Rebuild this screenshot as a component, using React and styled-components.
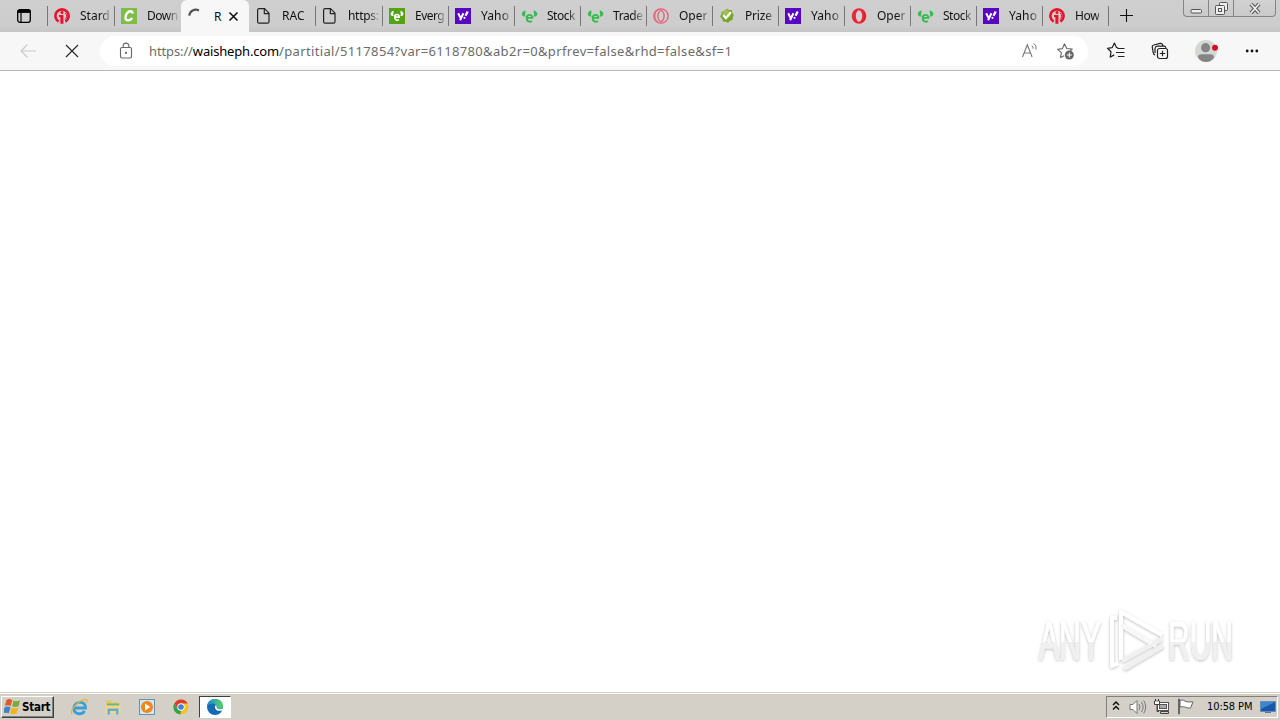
import React from "react";
import styled, { createGlobalStyle } from "styled-components";

const GlobalStyle = createGlobalStyle`
body {
  margin: 0;
  background: #fff;
  overflow: hidden;
}
* {
  box-sizing: border-box;
}
svg {
  display: block;
  flex: none;
}
`;

const Screen = styled.div`
display: flex;
flex-direction: column;
width: 1280px;
height: 720px;
background: #fff;
font-family: "Noto Sans", "Open Sans", sans-serif;
color: #111;
`;

const TabStrip = styled.div`
display: flex;
align-items: flex-start;
height: 32px;
flex: none;
background: linear-gradient(#cfcfcf, #cdcdcd 26px, #c6c6c6);
`;

const TabActions = styled.div`
display: flex;
width: 47px;
height: 32px;
padding: 8px 0 0 16px;
`;

const Tab = styled.div`
display: flex;
align-items: center;
width: ${(p) => p.$width || 66}px;
height: 32px;
flex: none;
padding-left: 7px;
background: linear-gradient(#777, #777) left 6px / ${(p) => (p.$plain ? "0 0" : "1px 20px")} no-repeat;
`;

const TabIcon = styled.div`
width: 26px;
flex: none;
`;

const TabTitle = styled.span`
white-space: nowrap;
font-size: 12px;
line-height: 18px;
letter-spacing: ${(p) => p.$spacing || "0"};
background: linear-gradient(90deg, #111 20px, rgba(17, 17, 17, 0.15) 31px);
background-clip: text;
-webkit-background-clip: text;
color: transparent;
`;

const ActiveTab = styled.div`
display: flex;
align-items: center;
width: 68px;
height: 32px;
flex: none;
padding-left: 6px;
background: #f7f7f7;
border-radius: 6px 6px 0 0;
font-size: 12px;
`;

const ActiveTitle = styled.span`
width: 14px;
margin: 0 0 0 11px;
`;

const NewTab = styled.div`
display: flex;
width: 75px;
height: 32px;
padding: 9px 0 0 12px;
background: linear-gradient(#777, #777) left 6px / 1px 20px no-repeat;
`;

const WindowControls = styled.div`
display: flex;
width: 93px;
height: 17px;
border: 1px solid #858585;
border-top: 0;
border-radius: 0 0 4px 4px;
background: linear-gradient(#d2d2d2, #cacaca);
`;

const WindowButton = styled.div`
display: flex;
align-items: center;
justify-content: center;
width: ${(p) => p.$width}px;
border-left: ${(p) => (p.$first ? "0" : "1px solid #858585")};
`;

const Toolbar = styled.div`
display: flex;
align-items: center;
height: 39px;
flex: none;
background: #f7f7f7;
border-bottom: 1px solid #b9b9b9;
`;

const NavButtons = styled.div`
display: flex;
gap: 28px;
width: 100px;
padding-left: 20px;
`;

const AddressBar = styled.div`
display: flex;
align-items: center;
width: 988px;
height: 30px;
padding: 0 12px 0 18px;
border-radius: 15px;
background: #fff;
`;

const Url = styled.div`
flex: 1;
margin-left: 15px;
font-size: 13px;
line-height: 20px;
letter-spacing: -0.12px;
white-space: nowrap;
color: #6c6c6c;
`;

const Domain = styled.span`
letter-spacing: -0.17px;
color: #000;
`;

const Path = styled.span`
letter-spacing: 0.35px;
`;

const AddressIcons = styled.div`
display: flex;
gap: 17px;
`;

const ToolIcons = styled.div`
display: flex;
align-items: center;
gap: 22px;
padding-left: 18px;
`;

const Page = styled.main`
display: flex;
flex: 1;
align-items: flex-end;
justify-content: flex-end;
padding: 0 40px 16px 0;
`;

const Taskbar = styled.div`
display: flex;
align-items: center;
height: 28px;
flex: none;
padding: 2px 1px 2px;
background: #d4d0c8;
border-top: 1px solid #d4d0c8;
box-shadow: inset 0 1px #fff;
font-family: "DejaVu Sans Condensed", "DejaVu Sans", sans-serif;
`;

const StartButton = styled.div`
display: flex;
align-items: center;
gap: 1px;
width: 53px;
height: 22px;
padding-left: 2px;
border: 1px solid;
border-color: #fff #404040 #404040 #fff;
box-shadow: inset -1px -1px #808080;
font-size: 11.5px;
font-weight: 700;
letter-spacing: -0.25px;
color: #000;
`;

const QuickLaunch = styled.div`
display: flex;
align-items: center;
flex: 1;
gap: 16px;
padding-left: 16px;
`;

const ActiveTask = styled.div`
display: flex;
align-items: center;
justify-content: center;
width: 32px;
height: 22px;
margin-left: -7px;
border: 1px solid;
border-color: #404040 #fff #fff #404040;
background: #fff;
`;

const Tray = styled.div`
display: flex;
align-items: center;
width: 172px;
height: 22px;
margin-right: 1px;
padding-left: 5px;
border: 1px solid;
border-color: #808080 #fff #fff #808080;
`;

const TrayIcons = styled.div`
display: flex;
align-items: center;
gap: 6px;
margin-left: 9px;
`;

const Clock = styled.span`
width: 53px;
margin-left: 12px;
font-size: 11px;
letter-spacing: -0.1px;
white-space: nowrap;
color: #000;
`;

const InfoIcon = () => (
  <svg width="16" height="16" viewBox="0 0 16 16" fill="none">
    <path d="M4.6 13.6A6.6 6.6 0 1 1 11.4 13.6" stroke="#e9112b" strokeWidth="2.6" />
    <circle cx="8" cy="4.6" r="1.5" fill="#e9112b" />
    <path d="M5 7h4.4v8.8H6.4V9H5z" fill="#e9112b" />
    <path d="M11.2 5A4.2 4.2 0 0 1 11 11.5" stroke="#e9112b" strokeWidth="1" />
  </svg>
);

const CIcon = () => (
  <svg width="16" height="16" viewBox="0 0 16 16" fill="none">
    <path d="M0 0h16v16H0z" fill="#7fbd4b" />
    <path d="M11.6 5.6C11.6 2.5 8 2.7 6 5.3c-2.2 2.9-2 7 .8 7.1 1.8.1 3.3-.9 4.4-2.4" stroke="#fff" strokeWidth="2.4" />
  </svg>
);

const FileIcon = () => (
  <svg width="16" height="16" viewBox="0 0 16 16" fill="none" stroke="#222" strokeWidth="1.2" strokeLinejoin="round">
    <path d="M1.6 2.2Q1.6.7 3.1.7h5.5l4.4 4.4v8.6q0 1.5-1.5 1.5H3.1q-1.5 0-1.5-1.5zM8.3 1v4.6h4.6" />
  </svg>
);

const BullIcon = ({ filled }) => (
  <svg width="18" height="16" viewBox="0 0 18 16" fill="none">
    {filled && <path d="M0 0h16v16H0z" fill="#54a313" />}
    <g transform={filled ? "translate(.9 .9) scale(.83)" : undefined}>
      <path d="M4.3 2.2C-.6 3.9-.2 9 4.8 8.6 3 7 5 5.5 4.3 2.2M12.9 2.2c4.9 1.7 4.5 6.8-.5 6.4 1.8-1.6-.2-3.1.5-6.4" fill={filled ? "#fff" : "#32bd4c"} />
      <path d="M5.6 9.9h5.8c.1-4.1-5.6-4-5.7-.2-.1 4.2 3.4 4.6 5.2 3.3" stroke={filled ? "#fff" : "#32bd4c"} strokeWidth="1.9" />
    </g>
  </svg>
);

const YahooIcon = () => (
  <svg width="16" height="16" viewBox="0 0 16 16" fill="none">
    <path d="M0 0h16v16H0z" fill="#5a05c4" />
    <path d="m3.2 5.2 2.4 4.9M8.4 5.2l-3.3 7" stroke="#fff" strokeWidth="2" />
    <path d="m12.7 3.4-2.2 4.4" stroke="#fff" strokeWidth="2.3" />
    <circle cx="9.5" cy="9.8" r="1.1" fill="#fff" />
  </svg>
);

const OperaIcon = ({ outline }) =>
  outline ? (
    <svg width="16" height="16" viewBox="0 0 16 16" fill="none" stroke="#e55b72">
      <circle cx="8" cy="8" r="7.2" strokeWidth="1.3" />
      <ellipse cx="8" cy="8" rx="3.1" ry="5.3" strokeWidth="1.3" />
      <path d="M5 2.2C.9 4 1.1 12 5 13.8" strokeWidth=".8" />
    </svg>
  ) : (
    <svg width="16" height="16" viewBox="0 0 16 16">
      <ellipse cx="8" cy="8" rx="7.3" ry="7.8" fill="#ed2635" />
      <ellipse cx="8" cy="8" rx="3.2" ry="5.7" fill="#d5d1d1" />
      <path d="M10.2 2c4.1 3 4.1 9.1 0 12 5.4-.3 6.5-9.7 0-12" fill="#b91e2c" opacity=".35" />
    </svg>
  );

const PrizeIcon = () => (
  <svg width="16" height="16" viewBox="0 0 16 16" fill="none">
    <path d="m8 .8 2.2 1.1 2.5.2.5 2.4L14.8 7l-1 2.3-.1 2.5-2.4 1L9 14.7l-2.5-1-2.5-.3-.8-2.5L1.2 8.6l1.1-2.3.4-2.6 2.5-.9z" fill="#78a52e" />
    <circle cx="7.5" cy="6" r="4.3" fill="#afca63" opacity=".7" />
    <path d="m4.3 7.3 2.6 2.8 5-6" stroke="#fff" strokeWidth="2.1" />
  </svg>
);

const icons = {
  info: <InfoIcon />,
  c: <CIcon />,
  file: <FileIcon />,
  bullFilled: <BullIcon filled />,
  bull: <BullIcon />,
  yahoo: <YahooIcon />,
  opera: <OperaIcon />,
  operaOutline: <OperaIcon outline />,
  prize: <PrizeIcon />,
};

const tabsBefore = [
  { icon: "info", title: "Stard", width: 67 },
  { icon: "c", title: "Down", width: 67, spacing: "-0.5px" },
];

const tabsAfter = [
  { icon: "file", title: "RAC", plain: true },
  { icon: "file", title: "https:", width: 67, spacing: "-0.3px" },
  { icon: "bullFilled", title: "Everg", spacing: "-0.5px" },
  { icon: "yahoo", title: "Yaho", spacing: "0.1px" },
  { icon: "bull", title: "Stock", spacing: "-0.5px" },
  { icon: "bull", title: "Trade", spacing: "-0.4px" },
  { icon: "operaOutline", title: "Oper" },
  { icon: "prize", title: "Prize", spacing: "-0.2px" },
  { icon: "yahoo", title: "Yaho", spacing: "0.1px" },
  { icon: "opera", title: "Oper" },
  { icon: "bull", title: "Stock", spacing: "-0.5px" },
  { icon: "yahoo", title: "Yaho", spacing: "0.1px" },
  { icon: "info", title: "How", spacing: "-0.3px" },
];

const TabItem = ({ icon, title, width, plain, spacing }) => (
  <Tab $width={width} $plain={plain}>
    <TabIcon>{icons[icon]}</TabIcon>
    <TabTitle $spacing={spacing}>{title}</TabTitle>
  </Tab>
);

function Tabs() {
  return (
    <TabStrip>
      <TabActions>
        <svg width="16" height="16" viewBox="0 0 16 16" fill="none" stroke="#000">
          <rect x="1.7" y="1.7" width="12.6" height="12.6" rx="2.2" strokeWidth="1.3" />
          <path d="M1.5 3.4h13" strokeWidth="3" />
          <path d="M5 4v10" strokeWidth="1.2" />
        </svg>
      </TabActions>
      {tabsBefore.map((tab, i) => <TabItem key={i} {...tab} />)}
      <ActiveTab>
        <svg width="16" height="16" viewBox="0 0 16 16" fill="none">
          <path d="M2.2 7.7C2.8 2.7 7.5.4 12 2.4" stroke="#555" strokeWidth="2.2" />
        </svg>
        <ActiveTitle>R</ActiveTitle>
        <svg width="11" height="11" viewBox="0 0 11 11">
          <path d="m1.5 1.5 8 8m0-8-8 8" stroke="#111" strokeWidth="1.6" />
        </svg>
      </ActiveTab>
      {tabsAfter.map((tab, i) => <TabItem key={i} {...tab} />)}
      <NewTab>
        <svg width="14" height="14" viewBox="0 0 14 14">
          <path d="M0 6.5h13M6.5 0v13" stroke="#111" strokeWidth="1.1" />
        </svg>
      </NewTab>
      <WindowControls>
        <WindowButton $width={24} $first>
          <svg width="13" height="12" viewBox="0 0 13 12">
            <rect x="1" y="7.5" width="10.5" height="3.5" rx="1" fill="#eee" stroke="#555" />
          </svg>
        </WindowButton>
        <WindowButton $width={25}>
          <svg width="13" height="13" viewBox="0 0 13 13" fill="#eee" stroke="#555">
            <rect x="4.5" y=".5" width="8" height="8" rx="1" />
            <rect x=".5" y="3.5" width="9" height="9" rx="1" />
            <rect x="3.5" y="6.5" width="3" height="3" />
          </svg>
        </WindowButton>
        <WindowButton $width={42}>
          <svg width="12" height="11" viewBox="0 0 12 11">
            <path d="m2 1 8 9m0-9-8 9" stroke="#555" strokeWidth="3.8" />
            <path d="m2 1 8 9m0-9-8 9" stroke="#eee" strokeWidth="1.8" />
          </svg>
        </WindowButton>
      </WindowControls>
    </TabStrip>
  );
}

function AddressRow() {
  return (
    <Toolbar>
      <NavButtons>
        <svg width="16" height="16" viewBox="0 0 16 16" fill="none">
          <path d="M16 8H1m6.5-6.5L1 8l6.5 6.5" stroke="#cacaca" strokeWidth="1.2" />
        </svg>
        <svg width="16" height="16" viewBox="0 0 16 16">
          <path d="m2 2 12 12m0-12L2 14" stroke="#222" strokeWidth="1.1" />
        </svg>
      </NavButtons>
      <AddressBar>
        <svg width="16" height="18" viewBox="0 0 16 18" fill="none" stroke="#666" strokeWidth="1.1">
          <rect x="2.5" y="5.5" width="11" height="10.5" rx="1.5" />
          <path d="M5.2 5.3V3.6c0-3.3 5.6-3.3 5.6 0v1.7" />
          <circle cx="8" cy="10.8" r=".6" fill="#666" />
        </svg>
        <Url>
          https://<Domain>waisheph.com</Domain>
          <Path>/partitial/5117854?var=6118780&amp;ab2r=0&amp;prfrev=false&amp;rhd=false&amp;sf=1</Path>
        </Url>
        <AddressIcons>
          <svg width="18" height="18" viewBox="0 0 18 18" fill="none" stroke="#777">
            <path d="m1.5 15 4.8-12.2L11.1 15M3.2 11h6.4" strokeWidth="1.1" />
            <path d="M10.8 3.5q1.7 1.2 1.2 3.2M12.7 1.4q3.3 2.2 2.3 6.1" />
          </svg>
          <svg width="20" height="18" viewBox="0 0 20 18" fill="none">
            <path d="m8.5 1.7 2.2 4.8 5.5.6-2.1 2M4.4 15.7l1-5-3.7-3.4 4.7-.7 2.1-4.9M4.4 15.7l3.6-2" stroke="#666" strokeWidth="1.1" strokeLinejoin="round" />
            <circle cx="13.3" cy="13" r="4.5" fill="#666" />
            <path d="M10.8 13h5m-2.5-2.5v5" stroke="#fff" />
          </svg>
        </AddressIcons>
      </AddressBar>
      <ToolIcons>
        <svg width="22" height="20" viewBox="0 0 22 20" fill="none" stroke="#222" strokeWidth="1.2" strokeLinejoin="round">
          <path d="M12.2 6.8 10.5 6.5 8.4 2 6.2 6.6l-4.7.7 3.5 3.4-.8 5.4 4-2.2" />
          <path d="M11.5 7.5h7M10 11.5h8.5M12 15.5h6.5" />
        </svg>
        <svg width="22" height="20" viewBox="0 0 22 20" fill="none" stroke="#222" strokeWidth="1.2">
          <rect x="7.5" y="7.5" width="10" height="10" rx="2" />
          <path d="M12.5 9.8v5.4m-2.7-2.7h5.4M5.2 14c-1.4-.2-1.8-1.3-2-2.4L2.3 6.4q-.3-2 1.5-2.4l6.2-1.6q2-.4 2.6 1.4l.4 1.2M5 12V7.5q.2-2 2-2.3h7q1.6 0 1.9 1.6" />
        </svg>
        <svg width="24" height="24" viewBox="0 0 24 24" fill="none">
          <circle cx="12" cy="12" r="11" fill="#d4d8d4" />
          <circle cx="11.6" cy="8.7" r="4.6" fill="#858585" />
          <path d="M4 18.5q0-3.2 3.5-3.2h8.8q3.7 0 3.7 3.2Q17 23 12 23t-8-4.5" fill="#858585" />
          <circle cx="21" cy="8.8" r="3" fill="#d70f22" />
        </svg>
        <svg width="24" height="20" viewBox="0 0 24 20" fill="#111">
          <circle cx="7.2" cy="10" r="1.4" />
          <circle cx="12" cy="10" r="1.4" />
          <circle cx="16.8" cy="10" r="1.4" />
        </svg>
      </ToolIcons>
    </Toolbar>
  );
}

const Watermark = () => (
  <svg width="210" height="72" viewBox="0 0 210 72" fill="none">
    <defs>
      <filter id="soft" x="-10%" y="-10%" width="120%" height="130%">
        <feDropShadow dx="0" dy="1" stdDeviation="1.8" floodColor="#000" floodOpacity=".28" />
      </filter>
      <linearGradient id="letters" x2="0" y2="1">
        <stop offset=".52" stopColor="#fff" />
        <stop offset=".53" stopColor="#f0f0f0" />
      </linearGradient>
    </defs>
    <g filter="url(#soft)" fontFamily="Liberation Sans, sans-serif" fontSize="53" fill="url(#letters)" stroke="url(#letters)" strokeWidth=".8">
      <text x="9" y="55" textLength="62" lengthAdjust="spacingAndGlyphs">ANY</text>
      <text x="138" y="55" textLength="65" lengthAdjust="spacingAndGlyphs">RUN</text>
    </g>
    <g filter="url(#soft)" stroke="#fff" strokeWidth="4" strokeLinejoin="round">
      <path d="M87 14h-5v48l6-3" />
      <path d="M91 56V8l41 23" />
      <path d="M91 21 126 42" stroke="#f8f8f8" />
      <path d="m92 57 40-22M94 65l39-23" stroke="#f0f0f0" />
    </g>
  </svg>
);

function BottomBar() {
  return (
    <Taskbar>
      <StartButton>
        <svg width="17" height="17" viewBox="1.5 1 13 13">
          <path d="M3.5 2.3q2-1 4.3.2L6.7 7Q4.4 6 2.2 7z" fill="#e75627" />
          <path d="M8.8 3q2.3 1 5-.2l-1.2 4.6q-2.6 1-4.9 0z" fill="#79ad37" />
          <path d="M2 8q2.3-1 4.5 0l-1.3 4.7q-2-1-4.4 0z" fill="#3f83c5" />
          <path d="M7.4 8.4q2.5 1 5 0l-1.3 4.5q-2.8 1.2-4.9 0z" fill="#f2b51d" />
        </svg>
        Start
      </StartButton>
      <QuickLaunch>
        <svg width="18" height="18" viewBox="0 0 18 18" fill="none">
          <path d="M4 10h11.5C16 2.7 4.9 2.3 3.9 9.7c-.7 7 8.2 7.5 10.7 3.3" stroke="#369fd9" strokeWidth="2.8" />
          <path d="M2.2 15.8C-.8 13 8.7 1.6 15.8 1.4c1.5.2 1.5 1.5.6 3.2" stroke="#e9b62d" strokeWidth="1.3" />
        </svg>
        <svg width="18" height="18" viewBox="0 0 18 18">
          <path d="M2 2.5h5l1 2h8v10H2z" fill="#e8c65c" />
          <path d="M3 5.5h12V8H3z" fill="#6bb887" />
          <path d="M1.5 7.5h15v8h-15z" fill="#f3d983" />
          <path d="M3.5 16.5v-6h11v6h-2.5V13H6v3.5z" fill="#68abd9" />
        </svg>
        <svg width="18" height="18" viewBox="0 0 18 18">
          <rect x="1.5" y="1.5" width="15" height="15" fill="#d2e8f5" stroke="#6093b5" />
          <circle cx="9" cy="9" r="6" fill="#f28418" />
          <path d="m7 5.5 5.3 3.5L7 12.5z" fill="#fff" />
        </svg>
        <svg width="18" height="18" viewBox="0 0 18 18">
          <circle cx="9" cy="9" r="7.6" fill="#f5c51f" />
          <path d="M2.4 5.2A7.6 7.6 0 0 1 15.7 5.4H9L6 11z" fill="#df3b2f" />
          <path d="M2.4 5.2 6 11.2l3.4 1.4-1.2 4A7.6 7.6 0 0 1 2.4 5.2" fill="#36a04c" />
          <circle cx="9" cy="9" r="3.7" fill="#fff" />
          <circle cx="9" cy="9" r="2.8" fill="#3f7fe0" />
        </svg>
        <ActiveTask>
          <svg width="18" height="18" viewBox="0 0 18 18">
            <defs>
              <linearGradient id="wave" x2="1">
                <stop stopColor="#168ed0" />
                <stop offset="1" stopColor="#5bd263" />
              </linearGradient>
            </defs>
            <circle cx="9" cy="9" r="8" fill="#1769b6" />
            <path d="M1 8.6C2.4-2 17-.6 17 7.9c0 4-6.1 4.1-6.4 2.3C11.9 5.3 4.5 3.2 1 8.6" fill="url(#wave)" />
            <path d="M10.2 6.9c-3 1.3-.7 7.3 5.5 5.6.7-.2 1-.1.7.5 1.3-1.7 1.6-2.4 1.3-2.8-3.2 2-7 .8-7-.8z" fill="#fff" />
          </svg>
        </ActiveTask>
      </QuickLaunch>
      <Tray>
        <svg width="8" height="16" viewBox="0 0 8 16" fill="none" stroke="#111" strokeWidth="1.5">
          <path d="m1 6 3-3 3 3M1 10.5l3-3 3 3" />
        </svg>
        <TrayIcons>
          <svg width="18" height="16" viewBox="0 0 18 16" fill="none" stroke="#777">
            <path d="M1 5.5h3l4-4v13l-4-4H1z" fill="#fff" />
            <path d="M10 5q2 3 0 6M12.3 3q3.7 5 0 10M14.7 1.5q4 6.5 0 13" />
          </svg>
          <svg width="18" height="17" viewBox="0 0 18 17" fill="none" stroke="#555">
            <rect x="4.5" y="4.5" width="11" height="8" fill="#fff" />
            <rect x="6.5" y="6.5" width="7" height="4" fill="#aaa" />
            <path d="M7.5 15.5h8v-2h-8zM1.5 3v3.5h5V3zM2.5 1v2M5.5 1v2M4 7v6.5h2" stroke="#444" />
            <path d="M2 3.5h4V6H2z" fill="#fff" stroke="none" />
          </svg>
          <svg width="18" height="17" viewBox="0 0 18 17" fill="#fff" stroke="#666">
            <path d="M1.5 1h1v15h-1zM3 2.5c3-1.5 4 .5 7 1.4h6L13.5 10c-4 .6-5-2.1-10.5-1z" />
          </svg>
        </TrayIcons>
        <Clock>10:58 PM</Clock>
        <svg width="16" height="16" viewBox="0 0 16 16">
          <path d="M.5 2.5h15v10H.5z" fill="#1758a8" stroke="#648bbb" />
          <path d="M1 3h14L1 10z" fill="#3c87d2" />
          <path d="M5 13h6v1H5z" fill="#59789a" />
        </svg>
      </Tray>
    </Taskbar>
  );
}

function App() {
  return (
    <>
      <GlobalStyle />
      <Screen>
        <Tabs />
        <AddressRow />
        <Page>
          <Watermark />
        </Page>
        <BottomBar />
      </Screen>
    </>
  );
}

export default App;
